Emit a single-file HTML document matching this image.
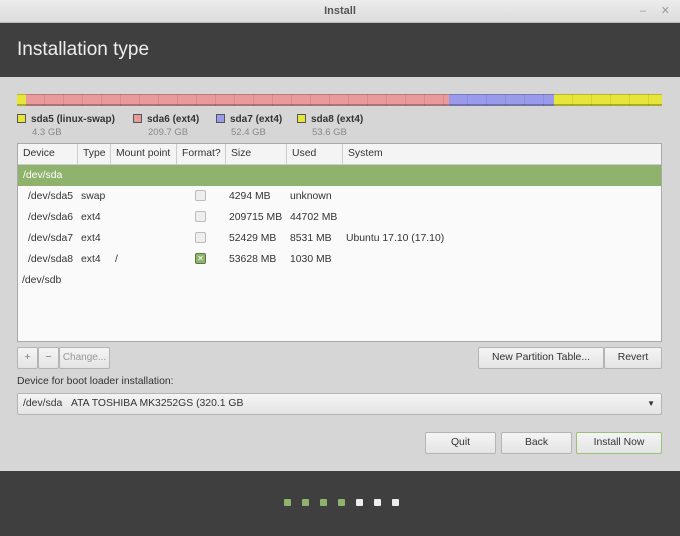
<!DOCTYPE html>
<html><head><meta charset="utf-8"><style>
*{box-sizing:border-box;margin:0;padding:0}
body{width:680px;height:536px;overflow:hidden;font-family:"Liberation Sans","DejaVu Sans",sans-serif;font-size:10.4px;color:#333;background:#d6d6d6;position:relative}
.a{position:absolute}
.tb{left:0;top:0;width:680px;height:23px;background:linear-gradient(#ececec,#dcdcdc);border-bottom:1px solid #bbb;text-align:center;line-height:23px;color:#555;font-weight:bold;font-size:11px}
.hd{left:0;top:23px;width:680px;height:54px;background:#3f3f3f;color:#eee;font-size:19px;padding:16px 0 0 17px}
.seg{top:94px;height:12px;border-top:1px solid rgba(0,0,0,.2);border-bottom:2px solid rgba(0,0,0,.25);background-image:repeating-linear-gradient(90deg,transparent 0 18px,rgba(0,0,0,.08) 18px 19px)}
.lg{top:114px;font-weight:bold;font-size:10px}
.lg i{display:inline-block;width:9px;height:9px;border:1px solid #555;margin-right:5px;vertical-align:-1px}
.gs{top:127px;font-size:9.5px;color:#888}
.tbl{left:17px;top:143px;width:645px;height:199px;background:#fafafa;border:1px solid #aaa}
.th{top:0;height:21px;line-height:20px;border-right:1px solid #ccc;border-bottom:1px solid #ccc;padding-left:5px;background:#f4f4f4}
.r{left:10px}
.cb{width:11px;height:11px;border:1px solid #bbb;border-radius:2px;background:#eee}
.btn{height:22px;border:1px solid #b4b4b4;border-radius:2px;background:linear-gradient(#f4f4f4,#e4e4e4);text-align:center;line-height:20px;color:#333}
.dot{top:499px;width:7px;height:7px;border-radius:1px}
</style></head><body>
<div class="a tb">Install<span style="position:absolute;right:34px;color:#999;font-weight:normal">–</span><span style="position:absolute;right:10px;color:#999">✕</span></div>
<div class="a hd">Installation type</div>
<div class="a seg" style="left:17px;width:9px;background-color:#e6e63a"></div>
<div class="a seg" style="left:26px;width:423px;background-color:#e99a9a"></div>
<div class="a seg" style="left:449px;width:105px;background-color:#9a9aea"></div>
<div class="a seg" style="left:554px;width:108px;background-color:#e6e63a"></div>
<div class="a lg" style="left:17px"><i style="background:#e6e63a"></i>sda5 (linux-swap)</div>
<div class="a lg" style="left:133px"><i style="background:#e99a9a"></i>sda6 (ext4)</div>
<div class="a lg" style="left:216px"><i style="background:#9a9aea"></i>sda7 (ext4)</div>
<div class="a lg" style="left:297px"><i style="background:#e6e63a"></i>sda8 (ext4)</div>
<div class="a gs" style="left:32px">4.3 GB</div>
<div class="a gs" style="left:148px">209.7 GB</div>
<div class="a gs" style="left:231px">52.4 GB</div>
<div class="a gs" style="left:312px">53.6 GB</div>
<div class="a tbl">
<div class="a th" style="left:0;width:60px">Device</div>
<div class="a th" style="left:60px;width:33px">Type</div>
<div class="a th" style="left:93px;width:66px">Mount point</div>
<div class="a th" style="left:159px;width:49px">Format?</div>
<div class="a th" style="left:208px;width:61px">Size</div>
<div class="a th" style="left:269px;width:56px">Used</div>
<div class="a th" style="left:325px;width:318px;border-right:none">System</div>
<div class="a" style="left:0;top:21px;width:643px;height:21px;background:#8fb36d;color:#fff;line-height:21px;padding-left:5px">/dev/sda</div>
<div class="a r" style="top:47px">/dev/sda5</div><div class="a" style="left:63px;top:47px">swap</div><div class="a cb" style="left:177px;top:46px"></div><div class="a" style="left:211px;top:47px">4294 MB</div><div class="a" style="left:272px;top:47px">unknown</div>
<div class="a r" style="top:68px">/dev/sda6</div><div class="a" style="left:63px;top:68px">ext4</div><div class="a cb" style="left:177px;top:67px"></div><div class="a" style="left:211px;top:68px">209715 MB</div><div class="a" style="left:272px;top:68px">44702 MB</div>
<div class="a r" style="top:89px">/dev/sda7</div><div class="a" style="left:63px;top:89px">ext4</div><div class="a cb" style="left:177px;top:88px"></div><div class="a" style="left:211px;top:89px">52429 MB</div><div class="a" style="left:272px;top:89px">8531 MB</div><div class="a" style="left:328px;top:89px">Ubuntu 17.10 (17.10)</div>
<div class="a r" style="top:110px">/dev/sda8</div><div class="a" style="left:63px;top:110px">ext4</div><div class="a" style="left:97px;top:110px">/</div><div class="a cb" style="left:177px;top:109px;background:#8fb36d;border-color:#5a7a45;color:#fff;font-size:8px;line-height:9px;text-align:center">✕</div><div class="a" style="left:211px;top:110px">53628 MB</div><div class="a" style="left:272px;top:110px">1030 MB</div>
<div class="a" style="left:4px;top:131px">/dev/sdb</div>
</div>
<div class="a btn" style="left:17px;top:347px;width:21px;color:#777">+</div>
<div class="a btn" style="left:38px;top:347px;width:21px;color:#777">−</div>
<div class="a btn" style="left:59px;top:347px;width:51px;color:#999;font-size:10px">Change...</div>
<div class="a btn" style="left:478px;top:347px;width:126px">New Partition Table...</div>
<div class="a btn" style="left:604px;top:347px;width:58px">Revert</div>
<div class="a" style="left:17px;top:376px">Device for boot loader installation:</div>
<div class="a btn" style="left:17px;top:393px;width:645px;text-align:left;padding-left:5px">/dev/sda&nbsp;&nbsp;&nbsp;ATA TOSHIBA MK3252GS (320.1 GB<span style="position:absolute;right:6px;font-size:8px">▼</span></div>
<div class="a btn" style="left:425px;top:432px;width:71px">Quit</div>
<div class="a btn" style="left:501px;top:432px;width:71px">Back</div>
<div class="a btn" style="left:576px;top:432px;width:86px;border-color:#9bc07a">Install Now</div>
<div class="a" style="left:0;top:471px;width:680px;height:65px;background:#3f3f3f"></div>
<div class="a dot" style="left:284px;background:#8fb36d"></div>
<div class="a dot" style="left:302px;background:#8fb36d"></div>
<div class="a dot" style="left:320px;background:#8fb36d"></div>
<div class="a dot" style="left:338px;background:#8fb36d"></div>
<div class="a dot" style="left:356px;background:#eee"></div>
<div class="a dot" style="left:374px;background:#eee"></div>
<div class="a dot" style="left:392px;background:#eee"></div>
</body></html>
